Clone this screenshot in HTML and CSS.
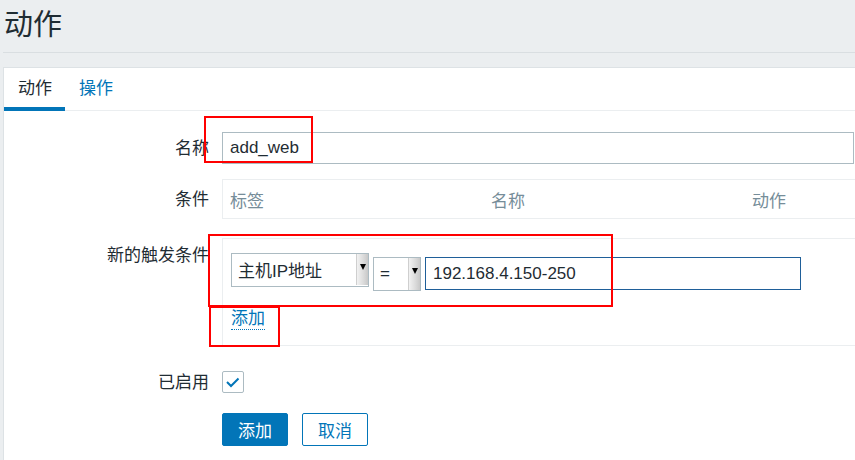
FILE: index.html
```html
<!DOCTYPE html>
<html lang="zh">
<head>
<meta charset="utf-8">
<link rel="stylesheet" href="styles.css">
</head>
<body>
<header class="page-header"><h1>动作</h1></header>
<main class="panel">
  <nav class="tabs">
    <a class="tab active">动作</a>
    <a class="tab">操作</a>
  </nav>
  <form class="form">
    <div class="row row-name">
      <label class="label">名称</label>
      <div class="field"><div class="input name-input">add_web</div></div>
    </div>
    <div class="row row-cond">
      <label class="label">条件</label>
      <div class="field">
        <div class="cond-table">
          <span class="th">标签</span><span class="th">名称</span><span class="th">动作</span>
        </div>
      </div>
    </div>
    <div class="row row-new">
      <label class="label label-top">新的触发条件</label>
      <div class="field">
        <div class="new-box">
          <div class="cond-line">
            <div class="select sel-type"><span class="sel-text">主机IP地址</span><span class="sel-btn"><i class="arrow"></i></span></div>
            <div class="select sel-op"><span class="sel-text">=</span><span class="sel-btn"><i class="arrow"></i></span></div>
            <div class="input ip-input">192.168.4.150-250</div>
          </div>
          <a class="link-add">添加</a>
        </div>
      </div>
    </div>
    <div class="row row-enabled">
      <label class="label">已启用</label>
      <div class="field">
        <span class="checkbox"><svg width="20" height="20" viewBox="0 0 20 20"><polyline points="4,10 8,14 15.5,6.5" fill="none" stroke="#0275b8" stroke-width="2"/></svg></span>
      </div>
    </div>
    <div class="row row-buttons">
      <span class="label"></span>
      <div class="field buttons">
        <button type="button" class="btn btn-primary">添加</button>
        <button type="button" class="btn btn-alt">取消</button>
      </div>
    </div>
  </form>
</main>
<div class="mark mark-1"></div>
<div class="mark mark-2"></div>
<div class="mark mark-3"></div>
</body>
</html>
```
FILE: styles.css
```css
html, body {
  margin: 0;
  padding: 0;
}
body {
  background: #ebeef0;
  font-family: "Liberation Sans", Arial, "Noto Sans CJK SC", sans-serif;
  font-size: 17px;
  color: #1f2c33;
  overflow: hidden;
  height: 460px;
  position: relative;
}
.page-header {
  margin-left: 3px;
  height: 53px;
  box-sizing: border-box;
  border-bottom: 1px solid #d9dee1;
}
.page-header h1 {
  margin: 0;
  padding-left: 1px;
  font-size: 29px;
  font-weight: normal;
  line-height: 51px;
}
.panel {
  margin-top: 14px;
  margin-left: 3px;
  background: #fff;
  border-left: 1px solid #dde2e5;
  border-top: 1px solid #dde2e5;
  height: 400px;
  overflow: hidden;
}
.tabs {
  display: flex;
  height: 43px;
  box-sizing: border-box;
  border-bottom: 1px solid #ebeef0;
}
.tab {
  display: block;
  height: 43px;
  box-sizing: border-box;
  padding: 10px 14px 0;
  line-height: 22px;
  color: #0275b8;
  margin-bottom: -1px;
}
.tab.active {
  color: #1f2c33;
  border-bottom: 4px solid #0275b8;
  padding-right: 13px;
}
.form {
  padding-top: 21px;
  width: 1000px;
}
.row {
  display: flex;
  align-items: center;
}
.label {
  width: 205px;
  padding-right: 13px;
  text-align: right;
  flex: none;
  line-height: 20px;
  padding-top: 2px;
}
.label-top {
  align-self: flex-start;
  padding-top: 8px;
}
.field {
  flex: 1;
}
.input {
  box-sizing: border-box;
  background: #fff;
  padding-left: 7px;
  display: flex;
  align-items: center;
}
.name-input {
  width: 632px;
  height: 32px;
  border: 1px solid #acbbc2;
}
.row-cond {
  margin-top: 15px;
}
.cond-table {
  width: 783px;
  height: 40px;
  box-sizing: border-box;
  border: 1px solid #ebeef0;
  display: grid;
  grid-template-columns: 261px 261px 261px;
  align-items: center;
}
.th {
  padding-left: 7px;
  color: #768d99;
}
.row-new {
  margin-top: 19px;
}
.new-box {
  height: 108px;
  box-sizing: border-box;
  border: 1px solid #ebeef0;
  border-right: none;
  padding: 14px 0 0 8px;
}
.cond-line {
  display: flex;
  align-items: flex-start;
  gap: 4px;
}
.select {
  box-sizing: border-box;
  border: 1px solid #acbbc2;
  background: #fff;
  display: flex;
  align-items: stretch;
}
.sel-text {
  flex: 1;
  padding-left: 6px;
  display: flex;
  align-items: center;
}
.sel-btn {
  width: 12px;
  background: linear-gradient(to right, #f2f2f2, #dadada 60%, #c8c8c8);
  border-left: 1px solid #cfcfcf;
  padding-top: 10px;
  box-sizing: border-box;
  display: flex;
  flex-direction: column;
  align-items: center;
}
.arrow {
  display: block;
  width: 0;
  height: 0;
  border-left: 3.5px solid transparent;
  border-right: 3.5px solid transparent;
  border-top: 6px solid #000;
}
.sel-type {
  width: 138px;
  height: 34px;
  padding-bottom: 1px;
}
.sel-op {
  width: 48px;
  height: 34px;
  margin-top: 4px;
}
.ip-input {
  width: 376px;
  height: 33px;
  margin-top: 4px;
  border: 1px solid #1f5f99;
}
.link-add {
  display: inline-block;
  margin-top: 18px;
  color: #0275b8;
  line-height: 20px;
  border-bottom: 1px dotted #0275b8;
}
.row-enabled {
  margin-top: 25px;
}
.checkbox {
  display: flex;
  align-items: center;
  justify-content: center;
  width: 22px;
  height: 22px;
  box-sizing: border-box;
  border: 1px solid #acbbc2;
  border-radius: 2px;
}
.row-buttons {
  margin-top: 20px;
}
.buttons {
  display: flex;
  gap: 14px;
}
.btn {
  width: 66px;
  height: 33px;
  box-sizing: border-box;
  border-radius: 2px;
  font-family: "Liberation Sans", Arial, "Noto Sans CJK SC", sans-serif;
  font-size: 17px;
  padding: 0;
}
.btn-primary {
  background: #0275b8;
  color: #fff;
  border: 1px solid #0275b8;
}
.btn-alt {
  background: #fff;
  color: #0275b8;
  border: 1px solid #0275b8;
}
.mark {
  position: absolute;
  border: 2px solid #f00;
  box-sizing: border-box;
}
.mark-1 {
  left: 204px;
  top: 116px;
  width: 109px;
  height: 47px;
}
.mark-2 {
  left: 208px;
  top: 234px;
  width: 405px;
  height: 73px;
}
.mark-3 {
  left: 209px;
  top: 306px;
  width: 71px;
  height: 41px;
}
```
